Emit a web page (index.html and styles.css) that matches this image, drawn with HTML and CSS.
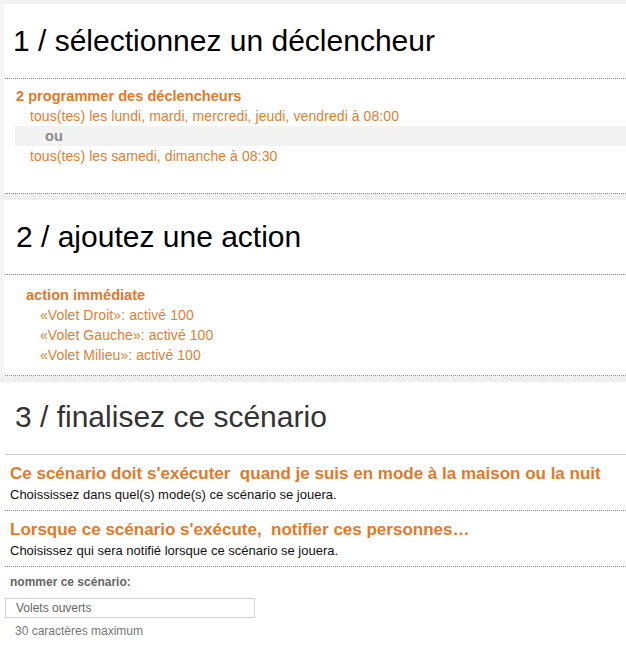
FILE: index.html
```html
<!DOCTYPE html>
<html lang="fr">
<head>
<meta charset="utf-8">
<title>Scénario</title>
<link rel="stylesheet" href="styles.css">
</head>
<body>
<div class="page">
  <div class="topband"></div>

  <section class="step step--side">
    <h1 class="step-title step-title--first">1 / sélectionnez un déclencheur</h1>
    <div class="step-body step-body--triggers">
      <div class="group-title">2 programmer des déclencheurs</div>
      <div class="item">tous(tes) les lundi, mardi, mercredi, jeudi, vendredi à 08:00</div>
      <div class="or-row">ou</div>
      <div class="item">tous(tes) les samedi, dimanche à 08:30</div>
    </div>
  </section>
  <div class="band"></div>

  <section class="step step--side">
    <h1 class="step-title">2 / ajoutez une action</h1>
    <div class="step-body step-body--actions">
      <div class="group-title">action immédiate</div>
      <div class="item">«Volet Droit»: activé 100</div>
      <div class="item">«Volet Gauche»: activé 100</div>
      <div class="item">«Volet Milieu»: activé 100</div>
    </div>
  </section>
  <div class="band"></div>

  <section class="step step--final">
    <h1 class="step-title step-title--dark">3 / finalisez ce scénario</h1>
    <div class="final-body">
      <div class="option">
        <div class="option-title">Ce scénario doit s'exécuter&nbsp; quand je suis en mode à la maison ou la nuit</div>
        <div class="option-desc">Choississez dans quel(s) mode(s) ce scénario se jouera.</div>
      </div>
      <div class="option">
        <div class="option-title">Lorsque ce scénario s'exécute,&nbsp; notifier ces personnes…</div>
        <div class="option-desc">Choisissez qui sera notifié lorsque ce scénario se jouera.</div>
      </div>
      <div class="name-block">
        <label class="name-label" for="name">nommer ce scénario:</label>
        <input class="name-input" id="name" type="text" value="Volets ouverts">
        <div class="name-hint">30 caractères maximum</div>
      </div>
    </div>
  </section>
</div>
</body>
</html>
```

FILE: styles.css
```css
* { box-sizing: border-box; }

html, body {
  margin: 0;
  padding: 0;
  background: #ffffff;
  font-family: "Liberation Sans", Arial, sans-serif;
  color: #000;
}

.page {
  width: 626px;
}

.topband {
  height: 4px;
  background: #f2f2f2;
}

.step--side {
  border-left: 4px solid #f5f5f5;
}

.step-title {
  margin: 0;
  font-weight: normal;
  font-size: 30px;
  line-height: 36px;
  padding: 19px 0 19px 11px;
  border-bottom: 1px dotted #8a8a8a;
  margin-left: 1px;
  color: #000;
}

.step-title--first {
  padding-left: 8px;
}

.step-title--dark {
  color: #333;
  margin-left: 5px;
  padding: 17px 0 19px 10px;
  border-bottom: 1px solid #c9c9c9;
}

.step-body {
  margin-left: 1px;
  border-bottom: 1px dotted #8a8a8a;
  font-size: 14px;
  line-height: 20px;
  color: #e07a2c;
}

.step-body--triggers {
  padding: 7px 0 27px 10px;
}

.step-body--actions {
  padding: 10px 0 10px 20px;
}

.group-title {
  font-weight: bold;
  font-size: 14.6px;
  padding-left: 1px;
}

.item {
  padding-left: 15px;
  letter-spacing: 0.08px;
  color: #dc7f36;
}

.or-row {
  background: #f3f3f3;
  color: #8a8a8a;
  font-weight: bold;
  font-size: 14.6px;
  padding-left: 30px;
}

.band {
  height: 6px;
  background: #efefef;
  background-image: repeating-linear-gradient(45deg, #f2f2f2 0 2px, #e9e9e9 2px 3px);
}

.final-body {
  padding-left: 5px;
}

.option {
  padding: 9px 0 7px 5px;
  border-bottom: 1px dotted #8a8a8a;
}

.option-title {
  font-size: 17px;
  line-height: 20px;
  font-weight: bold;
  color: #e07a2c;
}

.option-desc {
  margin-top: 3px;
  font-size: 13px;
  line-height: 16px;
  color: #111;
}

.name-block {
  padding-top: 7px;
  display: flex;
  flex-direction: column;
  align-items: flex-start;
}

.name-label {
  padding-left: 5px;
  font-size: 12px;
  line-height: 16px;
  font-weight: bold;
  color: #666;
}

.name-input {
  margin-top: 8px;
  width: 250px;
  height: 20px;
  border: 1px solid #d4d4d4;
  padding: 0 0 0 10px;
  font-family: "Liberation Sans", Arial, sans-serif;
  font-size: 12px;
  color: #666;
  background: #fff;
  outline: none;
}

.name-hint {
  margin-top: 5px;
  padding-left: 10px;
  font-size: 12px;
  line-height: 16px;
  color: #777;
}
```
